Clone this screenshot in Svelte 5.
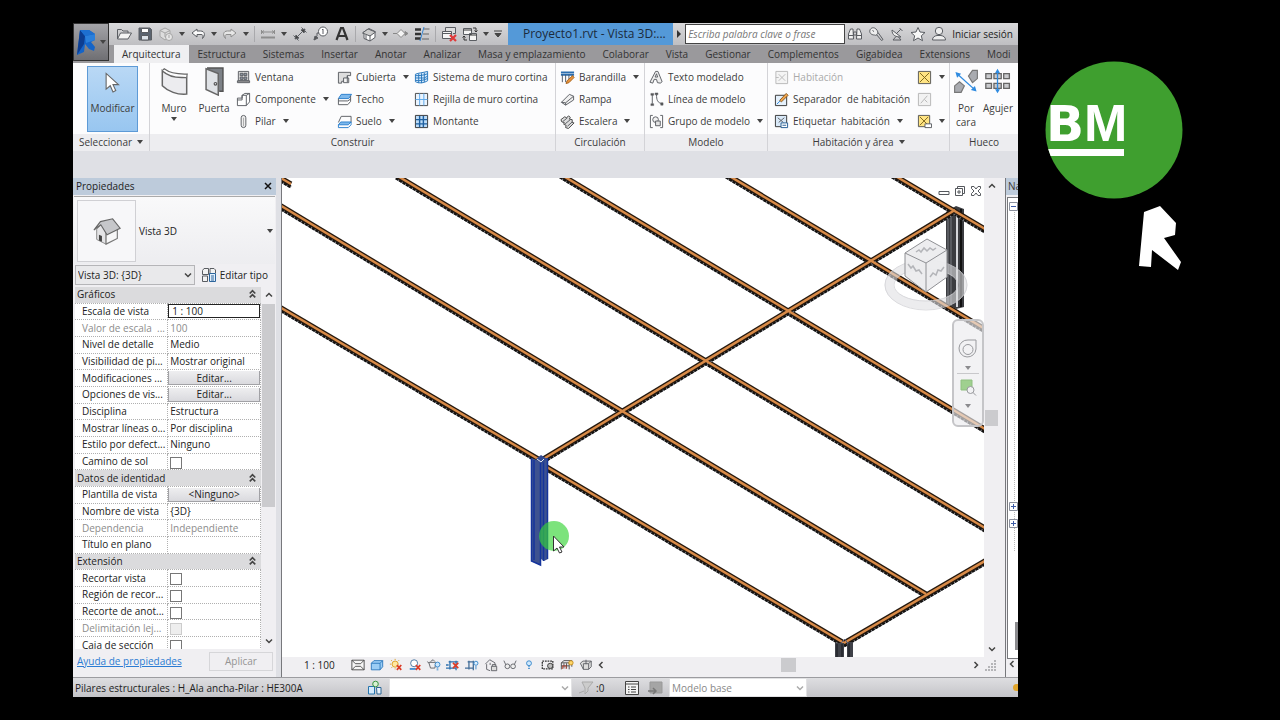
<script>
  const icons = {
    open: '<path d="M1.500 13V3.500h4l1.500 1.500h5v2"/><path d="M1.500 13l3-6h11l-3.500 6z" fill="#f4f4f4"/>',
    save: '<path d="M2 2h11l1.500 1.500V14H2z" fill="#5b6470"/><path d="M4.500 2.500h7v4h-7z" fill="#fff"/><path d="M4.500 9.500h7V14h-7z" fill="#dde3ea"/>',
    sync: '<g stroke="#a5a5a5"><path d="M2 4.500L7 2l5 2.500v6L7 14l-5-3.500z" fill="#ddd"/><path d="M2 4.500L7 7l5-2.500M7 7v4"/><circle cx="11" cy="11" r="3.500" fill="#e6e6e6"/><path d="M11 9v3"/></g>',
    undo: '<path d="M7 3L2 7l5 4V8.500h4c2 0 2.500 1 1.500 4 3-3 2.500-7.500-2-7.500H7z" fill="#fafafa"/>',
    redo: '<path d="M9 3l5 4-5 4V8.500H5c-2 0-2.500 1-1.500 4C.500 9.500 1 5 5.500 5H9z" fill="#e6e6e6" stroke="#8e8e8e"/>',
    measure: '<g stroke="#8d8d8d"><path d="M1.500 4v4M14.500 4v4M2 6h12M4 4.500L2 6l2 1.500M12 4.500L14 6l-2 1.500"/><path d="M1 11.500h14" stroke-width="2"/></g>',
    dim: '<path d="M3 13L13 3M1.500 9.500l5 5M9.500 1.500l5 5"/><path d="M3 13l1-4 3 3zM13 3L9 4l3 3z" fill="#444"/>',
    tag: '<circle cx="10" cy="5.500" r="4.500" fill="#fff"/><path d="M10 3v5M9 4l1-1M1 14l3-4V7h2"/><path d="M1 14l1-4 3 2z" fill="#555"/>',
    letter: '<path d="M2.500 14L7 2h2l4.500 12M4.500 10h7" stroke="#333" stroke-width="2.200"/>',
    house: '<path d="M2 6.500l6-4 6 3v6L9 15l-6-2.500V7" fill="#fff"/><path d="M1.500 7L7 3l7.500 3L9 10z" fill="#ccc"/><path d="M9 9.500V15M5 9v4"/>',
    section: '<path d="M4 7.500L8 3.500l4 4-4 4z" fill="#f4f4f4" stroke="#888"/><path d="M0 7.500h4M12 5.500l3 2-3 2z" stroke="#888" fill="#888"/>',
    thin: '<path d="M1 3.500h6M1 8h6M1 12.500h6" stroke="#333" stroke-width="2.500"/><path d="M9.500 3h6M9 8h6M8 13h7" stroke="#666"/><path d="M10 1L6 15" stroke="#3384d2"/>',
    closewin: '<path d="M4.500 5V1.500h10v6H12" fill="#ddd"/><path d="M1.500 5.500h9v7h-9z" fill="#f5f5f5"/><path d="M1.500 7.500h9"/><path d="M9 9l6 6M15 9l-6 6" stroke="#e03a3a" stroke-width="2.200"/>',
    switchwin: '<path d="M1.500 2.500h8v6h-8zM7.500 7.500h7v7h-7z" fill="#f5f5f5"/><path d="M1.500 4h8M7.500 9h7M11 2h3v4M12.500 4.500L14 6l1.500-1.500M5 14H2v-4M.500 11.500L2 10l1.500 1.500" stroke="#333"/>',
    binoc: '<path d="M1.500 13V8L3.500 3h2.500l.500 10zM14.500 13V8l-2-5H10l-.500 10z" fill="#f1f1f1"/><path d="M6.500 6h3v3h-3zM1.500 9.500h5M9.500 9.500h5"/>',
    key: '<path d="M8 8l5.500 6.500 1.500-1-5-7"/><path d="M6.500 9C3 9 1 6.500 2 4s4-3 6-1 2.500 4 1 5.500-2 .500-2.500.500z" fill="#eee"/><path d="M4.500 4.500l1.500 1"/>',
    dish: '<path d="M3 4c0 5 3 7 9 7z" fill="#eee"/><path d="M7.500 7.500L12 3M10.500 2l3 3M7 10.500L4 14h8l-2.500-3"/>',
    star: '<path d="M8 1.500l2 4.500 5 .500-3.700 3.300 1.200 4.900L8 12l-4.500 2.700 1.200-4.900L1 6.500 6 6z" fill="#f7f7f7"/>',
    user: '<circle cx="8" cy="5" r="3.700" fill="#eee"/><path d="M1.500 14c0-3 2-4 4.500-4.500h4c2.500.500 4.500 1.500 4.500 4.500z" fill="#eee"/>',
    cursor: '<path d="M3 1v11.500l3-2.500 2 4.500 2-1-2-4.300h4z" fill="#fff" stroke="#666" stroke-width=".8"/>',
    wall: '<path d="M1.500 2.500c3 3 7.500 4 13 3.500V15c-5 .500-10-1.500-13-4.500z" fill="#ececef" stroke="#666" stroke-width=".8"/><path d="M1.500 2.500l1-1c3 2.300 7 3 12.300 2.800l-.300 1.700" fill="#fff" stroke="#666" stroke-width=".6"/>',
    door: '<path d="M4 1h8.500v12.500H10.500" fill="#7d8187" stroke="#555" stroke-width=".8"/><path d="M3.500 1.500l6.500 2.500v11.500l-6.500-3z" fill="#dfe2e6" stroke="#666" stroke-width=".8"/><circle cx="8.500" cy="9.500" r=".7" stroke="#555" stroke-width=".6"/>',
    window: '<path d="M2.500 1.500h11v10h-11z" fill="#ddd"/><path d="M4.500 3.500h3v2.500h-3zM8.500 3.500h3v2.500h-3zM4.500 7.500h3V10h-3zM8.500 7.500h3V10h-3z" fill="#8f98a3"/><path d="M1.500 11.500h13v2h-13z" fill="#999"/>',
    component: '<path d="M1.500 6.500h5V3.500l3-2h5v9l-3.500 4h-9.500z" fill="#fff"/><path d="M6.500 3.500v5h-5M6.500 3.500h4.500l3.500-2M11 3.500v11"/>',
    column: '<rect x="5.500" y="1.500" width="5" height="13" rx="2.500" fill="#eee"/><path d="M8 4v9" stroke="#aaa"/>',
    roof: '<path d="M1.500 2.500h13V6H11v3H8v3H5v2H1.500z" fill="#ddd"/><path d="M7 8.500h5.500v5H7z" fill="#f4f4f4"/><path d="M11 6v7"/>',
    ceiling: '<path d="M1.500 7l3-4.500h11L12.500 7z" fill="#7db8ec" stroke="#2a7fce"/><path d="M1.500 7v6.500h10l3-3.500V4"/><path d="M1.500 9.500h10l3-2"/>',
    floor: '<path d="M1.500 9l3-6.500h10.500V9"/><path d="M1.500 11.500L4 8.500h11l-3 3z" fill="#7db8ec" stroke="#2a7fce"/><path d="M1.500 11.500v3H12l3-3v-3" stroke="#2a7fce"/>',
    curtain: '<path d="M1.500 4.500C5 3 9 3 14.500 1.500v10c-4 2.500-9 3-13 1z" fill="#d6e9fb" stroke="#2878bd"/><path d="M1.500 8.500h9.500l3.500-2M5 4v10M8 3.500v10.500M11 3v10M1.500 6c4 0 8 0 13-2M1.500 11c4 1 9 0 13-2" stroke="#2878bd"/>',
    gridc: '<path d="M1.500 1.500h13v13h-13z" fill="#eaf4fe" stroke="#444"/><path d="M6 1.500v13M10.500 1.500v13M1.500 8h13" stroke="#5ba6ea"/>',
    mullion: '<path d="M1.500 1.500h13v13h-13z" fill="#bcdcf8" stroke="#333"/><path d="M6 2v12M10 2v12M2 6h12M2 10.500h12" stroke="#1d5f9f" stroke-width="1.500"/>',
    railing: '<path d="M1 2.500h14M1 5h14" stroke="#2b6eb0" stroke-width="2"/><path d="M2.500 5v8M6 5v8M9.500 5v6M13 5v3" stroke="#4b5868"/><path d="M6.500 14.500l1-3 6-5.500 1.500 2-5.500 5.500z" fill="#e8923a" stroke="#a8641f"/>',
    ramp: '<path d="M1.500 11L10 2.500l4.500 2v4L6 14z" fill="#f0f0f0"/><path d="M1.500 11l4.500.500L14.500 4.500M6 11.500V14"/>',
    stair: '<path d="M1 6l4-3 2 1 2-2 2 1.500-1 2 3 .500v3l2 .500-6 6-3-1 .500-2.500L4 11l.500-2L2 8.500z" fill="#ddd" stroke="#444"/><path d="M3 8l5-4M5.500 10.500L11 6M8 13l5-4.500"/>',
    mtext: '<path d="M1 13L7 1.500h2.500l4.500 11-2 1.500-3-.500L8 10H5.500L4 14z" fill="#eee"/><path d="M6.500 7.500L8 4l1.200 3.500z" fill="#fff"/>',
    mline: '<path d="M3.500 3v9.500M8 2.500c0 6 1 9 6 10"/><path d="M2 1.500h3v2H2zM2 12.500h3v2H2zM6.500 1h3v2h-3zM12.500 11.500h2.500v2.500h-2.500z" fill="#555" stroke-width=".5"/>',
    mgroup: '<path d="M4 1.500H1.500v13H4M12 1.500h2.500v13H12"/><circle cx="7" cy="6" r="3" fill="#f2f2f2"/><path d="M7 7.500h5v5H7z" fill="#e5e5e5"/>',
    room: '<g stroke="#b9b9b9"><path d="M2 1.500h12.500v13H2z" fill="#f4f4f4"/><path d="M5 4.500l7 7M12 4.500l-7 7M2 8h3"/></g>',
    roomsep: '<path d="M1.500 3.500h12v11h-12z" fill="#e4f0fb" stroke="#333"/><path d="M3 13l8-8" stroke="#2f8be0"/><path d="M6 9l7-7.500 2 2L8 10.500z" fill="#f0a34a" stroke="#8a5a20"/>',
    roomtag: '<path d="M1.500 1.500h12v12h-12z" fill="#d9e9f8" stroke="#333"/><path d="M4 4l6 5M11 4L5 9"/><path d="M7.500 9.500h7v5h-7z" fill="#fff" stroke="#235c93"/><path d="M9 12h4" stroke="#235c93"/>',
    area: '<path d="M1.500 1.500h13v13h-13z" fill="#ffe483" stroke="#555"/><path d="M3 3l10 10M13 3L3 13" stroke="#7b6219"/>',
    areasep: '<g stroke="#b5b5b5"><path d="M1.500 1.500h13v13h-13z" fill="#f2f2f2"/><path d="M4 12l7-8M8 8l3 3"/></g>',
    areatag: '<path d="M1.500 1.500h12v12h-12z" fill="#ffe483" stroke="#555"/><path d="M3 3l9 9M12 3l-9 9" stroke="#7b6219"/><path d="M8.500 10.500h7v4h-7z" fill="#fff"/>',
    byface: '<path d="M9.500 5l2.500-3.500h3v5l-3 2.500zM1 11l3-2.500 3 2.500-2 4H1z" fill="#a9abb0" stroke="#777" stroke-width=".7"/><path d="M3 4l10 9" stroke="#2f8be0" stroke-width=".8"/><path d="M1.500 2.500l3.500 1L2.500 6zM14.500 14.500l-3.500-1 2.500-2.500z" fill="#2f8be0" stroke="none"/>',
    shaft: '<path d="M.500 3.500h3.500v3H.500zM11.500 3.500H15v3h-3.500zM.500 9.500h3.500v3H.500zM11.500 9.500H15v3h-3.500zM5.500 3.500h4.500v3H5.500zM5.500 9.500h4.500v3H5.500z" fill="#c9cacd" stroke="#666" stroke-width=".8"/><path d="M7.700 2v12" stroke="#2f8be0" stroke-width=".8"/><path d="M6.200 3L7.700.500 9.200 3zM6.200 13l1.500 2.500L9.200 13z" fill="#2f8be0" stroke="none"/>',
    bighouse: '<path d="M2.500 7v5.500l5 2.500V9L5 4.500z" fill="#e4e4e6" stroke="#888" stroke-width=".5"/><path d="M7.500 15l6-3V6.500l-6 3z" fill="#f7f7f8" stroke="#777" stroke-width=".6"/><path d="M1 7.500L4.500 3 11 1.500 15 6.500 8 10 4.700 4.700z" fill="#c6c7ca" stroke="#666" stroke-width=".6"/><path d="M3.700 10l1.600.700v3l-1.600-.700z" fill="#444" stroke="none"/>',
    edittype: '<path d="M1.500 3.500l1.500-2h4.500v6h-6zM9 7V1.500h4l1.500 1.500v3M1.500 9h5v5.500h-5z" fill="#f3f3f3"/><path d="M8.500 6.500h6v8h-6z" fill="#e2effb" stroke="#2c659c"/><path d="M10 9h3M10 11h3M10 13h3" stroke="#2c659c"/>',
    detail: '<path d="M1 2.500h14v11H1z" fill="#f6f6f6" stroke="#444"/><path d="M1 2.500l4 4h6l4-4M5 9.500h6M1 13.500l4-4M15 13.500l-4-4" stroke="#444"/>',
    style: '<path d="M1.500 6l3-3h10v7l-3 3.500h-10z" fill="#9bcdf5" stroke="#2574ba"/><path d="M1.500 6h10v7.500M11.500 6l3-3" stroke="#2574ba"/>',
    sun: '<circle cx="7" cy="7" r="3.500" fill="#ffe9a0" stroke="#d99a1e"/><path d="M7 1v1.500M1 7h1.500M2.500 2.500l1 1M2.500 11.500l1-1M11.500 2.500l-1 1M7 12v1" stroke="#d99a1e"/><path d="M9 8l5 5.500M14 8l-5 5.500" stroke="#dc3c28" stroke-width="2"/>',
    shadow: '<circle cx="7" cy="6" r="4" fill="#fff" stroke="#3d6e9c"/><path d="M2 12.500h7" stroke="#3b8ad0" stroke-width="2"/><path d="M9 8l5 5.500M14 8l-5 5.500" stroke="#dc3c28" stroke-width="2"/>',
    render: '<path d="M2 5h8l-1 6.500H4zM2 6L.500 4M4 4l3-2 2 2"/><circle cx="12" cy="7.500" r="2.800" fill="#cbe6fb" stroke="#2f82c9"/><path d="M11 11.500h2M11 13.500h2" stroke="#2f82c9"/>',
    crop: '<path d="M3 4.500h11M4.500 3v10M0 11.500h12M11.500 3v11M0 8h3" stroke="#2c70ae" stroke-width="1.500"/><path d="M8 5.500l6 6M14 5.500l-6 6" stroke="#dc3c28" stroke-width="2"/>',
    cropview: '<path d="M3 4.500h7M4.500 3v10M0 11.500h10M9.500 3v11" stroke="#446f9a" stroke-width="1.500"/><circle cx="12.500" cy="6" r="2.300" fill="#dff0fd" stroke="#2f82c9"/><path d="M12.500 9v4" stroke="#2f82c9"/>',
    lock: '<path d="M1.500 7l5-5 6 3.500v4M3 7v6l4 1.500M7 8V5.500"/><path d="M8.500 9.500h6v5h-6zM9.500 9.500v-2h4v2" fill="#ddd"/>',
    glasses: '<path d="M1 3l3 6.500M15 3l-3 6.500"/><circle cx="5" cy="9.500" r="2.700" fill="#eee"/><circle cx="11.500" cy="9.500" r="2.700" fill="#eee"/>',
    bulb: '<circle cx="8" cy="6" r="2.800" fill="#cfe8fc" stroke="#2f82c9"/><path d="M7 10h2M7 12h2" stroke="#2f82c9"/>',
    film: '<path d="M1.500 3.500h12v9h-12z" stroke="#333" stroke-dasharray="2 1" stroke-width="1.500"/><circle cx="10.500" cy="9" r="3" fill="#bbb" stroke="#333"/>',
    analytic: '<path d="M1.500 5.500l3-2.500h9v7M1.500 5.500h9V13M1.500 5.500V13M4.500 6v6M7.500 6v6M1.500 9h9" stroke="#444"/><circle cx="12.500" cy="5.500" r="2.500" fill="#ffd76a" stroke="#c48a18"/><path d="M3 12.500V9h4v3.500" stroke="#bd4334"/>',
    temp: '<path d="M1.500 6l3-2.500h9.500V10l-3 3H5z" fill="#ddd"/><path d="M5 6.500h6V13M11 6.500l3-3M5 6.500V13M8 2v5"/>',
    worksets: '<path d="M1.500 6.500h6v7.500h-6z" fill="#d5eafb" stroke="#2474ad"/><circle cx="8.500" cy="4" r="2.800" fill="#d9f1d3" stroke="#3a9440"/><path d="M9.500 7.500H14V14H10z" fill="#eaf2fa" stroke="#2b6796"/>',
    funnel: '<path d="M4 2h11L10 8v3l-3 3V8z" fill="#ccc" stroke="#aaa"/><path d="M1 13l5-2" stroke="#aaa"/>',
    list: '<path d="M1.500 1.500h13v13h-13z" fill="#f5f5f5" stroke="#444"/><path d="M1.500 4h13M4 7h1.500M4 9.500h1.500M4 12h1.500M7 7h5M7 9.500h5M7 12h5" stroke="#444"/>',
    exclude: '<path d="M3 2h12v11H3z" fill="#a5a5a5" stroke="#999"/><path d="M1 11h7M6 8l3 3-3 3" stroke="#777" stroke-width="1.500"/>',
  };

  const quick = [
    'open', 'save', 'sync', '▾', 'undo', '▾', 'redo', '▾', '|',
    'measure', '▾', 'dim', 'tag', 'letter', '|',
    'house', '▾', 'section', 'thin', '|', 'closewin', 'switchwin', '▾',
  ];

  const tabs = [
    'Arquitectura', 'Estructura', 'Sistemas', 'Insertar', 'Anotar', 'Analizar', 'Masa y emplazamiento',
    'Colaborar', 'Vista', 'Gestionar', 'Complementos', 'Gigabidea', 'Extensions', 'Modi',
  ];

  const construir = [
    [['window', 'Ventana'], ['component', 'Componente', true], ['column', 'Pilar', true]],
    [['roof', 'Cubierta', true], ['ceiling', 'Techo'], ['floor', 'Suelo', true]],
    [['curtain', 'Sistema de muro cortina'], ['gridc', 'Rejilla de muro cortina'], ['mullion', 'Montante']],
  ];
  const circulacion = [['railing', 'Barandilla', true], ['ramp', 'Rampa'], ['stair', 'Escalera', true]];
  const modelo = [['mtext', 'Texto modelado'], ['mline', 'Línea de modelo'], ['mgroup', 'Grupo de modelo', true]];
  const habitacion = [
    ['room', 'Habitación', false, true],
    ['roomsep', 'Separador  de habitación'],
    ['roomtag', 'Etiquetar  habitación', true],
  ];
  const areas = [['area', '', true], ['areasep', '', false, true], ['areatag', '', true]];

  const props = [
    { group: 'Gráficos' },
    { name: 'Escala de vista', value: '1 : 100', kind: 'input' },
    { name: 'Valor de escala  ...', value: '100', off: true },
    { name: 'Nivel de detalle', value: 'Medio' },
    { name: 'Visibilidad de pi...', value: 'Mostrar original' },
    { name: 'Modificaciones ...', value: 'Editar...', kind: 'button' },
    { name: 'Opciones de vis...', value: 'Editar...', kind: 'button' },
    { name: 'Disciplina', value: 'Estructura' },
    { name: 'Mostrar líneas o...', value: 'Por disciplina' },
    { name: 'Estilo por defect...', value: 'Ninguno' },
    { name: 'Camino de sol', kind: 'check' },
    { group: 'Datos de identidad' },
    { name: 'Plantilla de vista', value: '<Ninguno>', kind: 'button' },
    { name: 'Nombre de vista', value: '{3D}' },
    { name: 'Dependencia', value: 'Independiente', off: true },
    { name: 'Título en plano', value: '' },
    { group: 'Extensión' },
    { name: 'Recortar vista', kind: 'check' },
    { name: 'Región de recor...', kind: 'check' },
    { name: 'Recorte de anot...', kind: 'check' },
    { name: 'Delimitación lej...', kind: 'check', off: true },
    { name: 'Caja de sección', kind: 'check' },
  ];

  const viewTools = ['detail', 'style', 'sun', 'shadow', 'render', 'crop', 'cropview', 'lock', 'glasses', 'bulb', 'film', 'analytic', 'temp'];

  // model beams in canvas units: x1, y1, x2, y2
  const beams = [
    [274, 173, 291, 183],
    [278, 305, 540, 459],
    [545, 465, 844, 642],
    [278, 203, 926, 593],
    [396, 174, 990, 530],
    [560, 173, 990, 431],
    [726, 173, 990, 331],
    [892, 173, 990, 231],
    [540, 460, 955, 209],
    [844, 642, 990, 557],
  ];

  let activeTab = $state('Arquitectura');
</script>

{#snippet icon(name, size = 'sm')}
  <svg class="icon {size}" viewBox="0 0 16 16" aria-hidden="true">{@html icons[name]}</svg>
{/snippet}

{#snippet caret()}
  <svg class="caret" viewBox="0 0 6 4" aria-hidden="true"><path d="M0 0h6L3 4z" /></svg>
{/snippet}

{#snippet chevron(d)}
  <svg class="chev" viewBox="0 0 10 10" aria-hidden="true"><path {d} /></svg>
{/snippet}

{#snippet stack(items)}
  <div class="stack">
    {#each items as [name, label, menu, off]}
      <button type="button" class="tool" disabled={off} aria-label={label || name}>
        {@render icon(name)}
        {#if label}<span>{label}</span>{/if}
        {#if menu}{@render caret()}{/if}
      </button>
    {/each}
  </div>
{/snippet}

<main>
  <div class="window">
    <header>
      <button type="button" class="app-btn" aria-label="Menú">
        <svg viewBox="0 0 22 28" aria-hidden="true">
          <path d="M4 2h9l6 4v6l-4 2 4 5-1 4-5-2-4-5-1 8-7 3z" fill="#1464c8" />
          <path d="M4 2l5 6-1 8-7 11z" fill="#0c3d91" />
          <path d="M9 8l10-2v6l-9 3z" fill="#2a7fdb" />
          <path d="M13 2l6 4-10 2-5-6z" fill="#1d6fd0" />
        </svg>
        {@render caret()}
      </button>
      <div class="bars">
        <div class="titlebar">
          <div class="quick">
            {#each quick as q}
              {#if q === '|'}<i class="sep"></i>
              {:else if q === '▾'}{@render caret()}
              {:else}<button type="button" aria-label={q}>{@render icon(q)}</button>{/if}
            {/each}
            <svg class="more" viewBox="0 0 8 8" aria-hidden="true"><path d="M0 1h8M1 3.500h6L4 7z" /></svg>
          </div>
          <div class="doc">Proyecto1.rvt - Vista 3D:...</div>
          <svg class="next" viewBox="0 0 4 8" aria-hidden="true"><path d="M0 0l4 4-4 4z" /></svg>
          <input class="search" placeholder="Escriba palabra clave o frase" aria-label="Buscar" />
          <div class="account">
            {#each ['binoc', 'key', 'dish', 'star', 'user'] as n}
              <button type="button" aria-label={n}>{@render icon(n)}</button>
            {/each}
            <a href="#login">Iniciar sesión</a>
          </div>
        </div>
        <nav>
          {#each tabs as t}
            <button type="button" class:active={activeTab === t} onclick={() => (activeTab = t)}>{t}</button>
          {/each}
        </nav>
      </div>
    </header>

    <div class="ribbon">
      <section>
        <div class="tools">
          <button type="button" class="modify">{@render icon('cursor', 'md')}<span>Modificar</span></button>
        </div>
        <h2>Seleccionar {@render caret()}</h2>
      </section>
      <section>
        <div class="tools build">
          <button type="button" class="big">{@render icon('wall', 'lg')}<span>Muro</span>{@render caret()}</button>
          <button type="button" class="big">{@render icon('door', 'lg')}<span>Puerta</span></button>
          {#each construir as col}{@render stack(col)}{/each}
        </div>
        <h2>Construir</h2>
      </section>
      <section>
        <div class="tools">{@render stack(circulacion)}</div>
        <h2>Circulación</h2>
      </section>
      <section>
        <div class="tools">{@render stack(modelo)}</div>
        <h2>Modelo</h2>
      </section>
      <section>
        <div class="tools spread">{@render stack(habitacion)}{@render stack(areas)}</div>
        <h2>Habitación y área {@render caret()}</h2>
      </section>
      <section class="last">
        <div class="tools">
          <button type="button" class="big">{@render icon('byface', 'ml')}<span>Por<br />cara</span></button>
          <button type="button" class="big">{@render icon('shaft', 'ml')}<span>Agujer</span></button>
        </div>
        <h2>Hueco</h2>
      </section>
    </div>

    <div class="body">
      <aside class="props">
        <h3>Propiedades <button type="button" aria-label="Cerrar">{@render chevron('M2 2l6 6M8 2l-6 6')}</button></h3>
        <button type="button" class="type">
          <span class="thumb">{@render icon('bighouse', 'xl')}</span>
          <span>Vista 3D</span>
          {@render caret()}
        </button>
        <div class="instance">
          <div class="pick">
            <select aria-label="Vista"><option>Vista 3D: {'{3D}'}</option></select>
            {@render chevron('M2 3.5l3 3 3-3')}
          </div>
          <button type="button">{@render icon('edittype')}Editar tipo</button>
        </div>
        <div class="grid">
          <div class="clip">
            <table>
              <tbody>
                {#each props as p, i}
                  {#if p.group}
                    <tr class="group">
                      <th colspan="2">{p.group}{@render chevron('M2.500 5L5 2.500 7.500 5M2.500 8.500L5 6l2.500 2.500')}</th>
                    </tr>
                  {:else}
                    <tr class:off={p.off}>
                      <td class="name"><label for="p{i}">{p.name}</label></td>
                      <td class={p.kind}>
                        {#if p.kind === 'check'}<input id="p{i}" type="checkbox" disabled={p.off} />
                        {:else if p.kind === 'button'}<button id="p{i}" type="button">{p.value}</button>
                        {:else if p.kind === 'input'}<input id="p{i}" value={p.value} />
                        {:else}<output id="p{i}">{p.value}</output>{/if}
                      </td>
                    </tr>
                  {/if}
                {/each}
              </tbody>
            </table>
          </div>
          <div class="vscroll">
            {@render chevron('M2 6.5l3-3 3 3')}
            <div class="track"><div class="knob"></div></div>
            {@render chevron('M2 3.5l3 3 3-3')}
          </div>
        </div>
        <footer>
          <a href="#help">Ayuda de propiedades</a>
          <button type="button" disabled>Aplicar</button>
        </footer>
      </aside>

      <div class="view">
        <div class="view-top">
          <div class="canvas">
            <svg class="model" viewBox="282 178 702 479" preserveAspectRatio="xMinYMin slice" aria-label="Vista 3D">
              <!-- far column -->
              <g>
                <path d="M946 212l10-6 8 3v98l-8 2-10-6z" fill="#3b3c40" />
                <path d="M948 213v92M951 212v94" stroke="#77797e" />
                <path d="M957 210v97" stroke="#d5d6da" stroke-width="2" />
                <path d="M961 209v98" stroke="#111" stroke-width="2" />
              </g>
              <g fill="none">
                {#each beams as [x1, y1, x2, y2]}
                  <path d="M{x1} {y1 + 4}L{x2} {y2 + 4}" stroke="#8b8c92" stroke-width="3" />
                  <path d="M{x1} {y1 + 4}L{x2} {y2 + 4}" stroke="#111" stroke-width="3" stroke-dasharray="3 1" />
                  <path d="M{x1} {y1 + 1}L{x2} {y2 + 1}" stroke="#24180e" stroke-width="5" />
                {/each}
                {#each beams as [x1, y1, x2, y2]}
                  <path d="M{x1} {y1 + 1}L{x2} {y2 + 1}" stroke="#d98b48" stroke-width="2.400" />
                {/each}
              </g>
              <!-- front column -->
              <path d="M835 643h9v14h-9zM847 642h6v15h-6z" fill="#3f4148" />
              <path d="M837 644v13M842 644v13M849 643v14" stroke="#17181c" />
              <path d="M841 643l4-4 3 5" fill="none" stroke="#5b6480" />
              <!-- selected column -->
              <path d="M531 458l9 3v104l-9-4z" fill="#3d5290" />
              <path d="M541 461l7-3v101l-4 2-3-2z" fill="#3d5290" />
              <path d="M531.500 458v103l9 4V461M543.500 459v102M547.500 458v101M534 460v100" fill="none" stroke="#15349c" stroke-width="1.500" />
              <path d="M536 459l5-4 6 4-5 5z" fill="#30488f" />
              <path d="M537 459l4 3 3-3" fill="none" stroke="#e6e8f0" />
              <circle cx="554" cy="536" r="15" fill="#35d435" opacity=".65" />
              <path d="M553.500 536v15l3.500-3 2.500 5 2.500-1-2.500-5h4.500z" fill="#fff" stroke="#333" />
              <!-- view cube -->
              <g>
                <ellipse cx="926" cy="285" rx="37" ry="20" fill="none" stroke="#e0e0e3" stroke-width="9" opacity=".6" />
                <ellipse cx="926" cy="285" rx="41" ry="25" fill="none" stroke="#cfcfd2" stroke-width=".7" />
                <ellipse cx="926" cy="285" rx="32" ry="16" fill="none" stroke="#cfcfd2" stroke-width=".7" />
                <path d="M905 253l22-14 20 11v27l-21 15-21-16z" fill="#ececee" opacity=".92" />
                <path d="M905 253l22-14 20 11-21 13zM926 263v29l-21-16v-23M926 292l21-15v-27" fill="none" stroke="#8f9094" />
                <path d="M916 252l3-2 2 2 3-4 3 3 3-3 3 2 3-2M908 264l3 4 2-2 3 5 3-1 3 4M930 277l3-4 3 2 2-5 3 1 3-4" fill="none" stroke="#b4b5b9" stroke-width="1.500" />
              </g>
            </svg>
            <div class="win-ctl">
              <button type="button" aria-label="Minimizar">
                <svg viewBox="0 0 12 12"><path d="M1 6.500h10v3H1z" /></svg>
              </button>
              <button type="button" aria-label="Restaurar">
                <svg viewBox="0 0 12 12"><path d="M3.500 3V1.500h7v7H9M1.500 3.500h7v7h-7zM4 6h2v2H4z" /></svg>
              </button>
              <button type="button" aria-label="Cerrar vista">
                <svg viewBox="0 0 12 12"><path d="M1.500 1.500H4l2 2.500 2-2.500h2.500v2L8 6l2.500 2.500v2H8L6 8l-2 2.500H1.500v-2L4 6 1.500 3.500z" /></svg>
              </button>
            </div>
            <div class="navbar">
              <button type="button" aria-label="Rueda de navegación">
                <svg viewBox="0 0 20 20"><path d="M10 1h8v9a8.500 8.500 0 1 1-8-9z" /><circle cx="10" cy="10.500" r="5" /></svg>
              </button>
              {@render caret()}
              <hr />
              <button type="button" aria-label="Zoom región">
                <svg viewBox="0 0 20 20"><path d="M3 3h11v10H3z" class="green" /><circle cx="12.500" cy="13" r="3.500" /><path d="M15 15.500l3 3" /></svg>
              </button>
              {@render caret()}
            </div>
          </div>
          <div class="vscroll view-v">
            {@render chevron('M2 6.5l3-3 3 3')}
            <div class="track"><div class="knob"></div></div>
            {@render chevron('M2 3.5l3 3 3-3')}
          </div>
        </div>
        <div class="viewbar">
          <span class="scale">1 : 100</span>
          <div class="view-tools">
            {#each viewTools as n}<button type="button" aria-label={n}>{@render icon(n)}</button>{/each}
          </div>
          {@render chevron('M6.5 2l-3 3 3 3')}
          <div class="htrack"><div class="knob"></div></div>
          {@render chevron('M3.5 2l3 3-3 3')}
          <svg class="grip" viewBox="0 0 12 12"><path d="M9 2h2M6 5h2M9 5h2M3 8h2M6 8h2M9 8h2M0 11h2M3 11h2M6 11h2M9 11h2" /></svg>
        </div>
      </div>

      <aside class="browser">
        <h3>Na</h3>
        <div class="tree">
          <svg viewBox="0 0 10 460" preserveAspectRatio="xMinYMin" aria-hidden="true">
            <path class="dots" d="M6.500 14v340" />
            <path class="box" d="M1.500 4.500h8v8h-8zM1.500 304.500h8v8h-8zM1.500 321.500h8v8h-8z" />
            <path class="mark" d="M3 8.500h5M3 308.500h5M5.500 306v5M3 325.500h5M5.500 323v5" />
            <path class="thumb-r" d="M7 424h3v28H7z" />
          </svg>
        </div>
        <div class="foot">{@render chevron('M6.5 2l-3 3 3 3')}</div>
      </aside>
    </div>

    <div class="status">
      <span class="msg">Pilares estructurales : H_Ala ancha-Pilar : HE300A</span>
      {@render icon('worksets')}
      <div class="pick wide">
        <select aria-label="Subproyecto"><option></option></select>
        {@render chevron('M2 3.5l3 3 3-3')}
      </div>
      {@render icon('funnel')}
      <span class="count">:0</span>
      {@render icon('list')}
      {@render icon('exclude')}
      <div class="pick">
        <select aria-label="Opción de diseño"><option>Modelo base</option></select>
        {@render chevron('M2 3.5l3 3 3-3')}
      </div>
      <i class="dot"></i>
    </div>
  </div>

  <div class="brand">
    <svg viewBox="0 0 262 300" role="img" aria-label="BM">
      <clipPath id="disc"><circle cx="96" cy="130" r="68.500" /></clipPath>
      <circle cx="96" cy="130" r="68.500" fill="#3f9f2f" />
      <g clip-path="url(#disc)" fill="#fff">
        <text x="28" y="141" class="logo-b">B</text>
        <text x="66" y="141" class="logo-m">M</text>
        <path d="M20 149h86v7H20z" />
      </g>
      <path d="M126 212l16-6 16 17-1 12-11 3 17 24-3 8-26-20-1 17-12-1z" fill="#fff" />
    </svg>
  </div>
</main>

<style>
  :global(body) { background: #000; }
  main {
    display: grid; grid-template-columns: minmax(0, 1fr) 262px; height: 100vh; box-sizing: border-box;
    padding: 23px 0 23px 73px; overflow: hidden; background: #000; color: #3c3c3c;
    font: 10px/16px "Open Sans", "Noto Sans", sans-serif;
  }
  button { font: inherit; color: inherit; background: none; border: 0; padding: 0; margin: 0; white-space: nowrap; }
  h2, h3 { margin: 0; font: inherit; }
  a { color: inherit; text-decoration: none; }
  svg { display: block; flex: none; }
  .window { display: flex; flex-direction: column; min-height: 0; background: #dfe0e5; overflow: hidden; }

  .icon { width: 16px; height: 16px; fill: none; stroke: #5a5d62; stroke-width: 1; }
  .icon.md { width: 22px; height: 22px; }
  .icon.ml { width: 26px; height: 30px; }
  .icon.lg { width: 31px; height: 30px; }
  .icon.xl { width: 30px; height: 30px; }
  .caret { width: 6px; height: 4px; fill: #444; }
  .chev { width: 10px; height: 10px; fill: none; stroke: #444; stroke-width: 1.5; }

  header { display: flex; height: 40px; flex: none; background: #9b9a9d; }
  .app-btn {
    display: flex; align-items: center; justify-content: center; gap: 2px; width: 36px; height: 38px;
    box-sizing: border-box; border: 1px solid #333; background: linear-gradient(#a4a4a8, #6f6f73);
  }
  .app-btn > svg:first-child { width: 22px; height: 28px; }
  .bars { flex: 1; min-width: 0; }
  .titlebar { display: flex; align-items: center; height: 22px; background: linear-gradient(#d8d8da, #bfbfc2); }
  .quick { display: flex; align-items: center; gap: 5px; padding: 0 6px 0 7px; }
  .sep { width: 1px; height: 16px; background: #a9a9ac; }
  .more { width: 8px; height: 8px; fill: #444; stroke: #444; }
  .doc { flex: 1; height: 22px; padding-left: 15px; background: #5499d8; color: #1b2b3c; font-size: 12px; line-height: 22px; white-space: nowrap; overflow: hidden; }
  .next { width: 4px; height: 8px; padding: 0 4px; fill: #333; }
  .search {
    width: 160px; height: 20px; box-sizing: border-box; border: 1px solid #444; background: #fff; padding: 0 2px;
    font: italic 10px "Open Sans", sans-serif; color: #555;
  }
  .search::placeholder { color: #777; }
  .account { display: flex; align-items: center; gap: 5px; padding: 0 5px 0 2px; color: #222; white-space: nowrap; }
  nav { display: flex; height: 18px; padding-left: 5px; overflow: hidden; background: #9a999c; }
  nav button { padding: 0 9px 0 8px; flex: none; line-height: 18px; color: #333; }
  nav button.active { padding: 0 8px; margin-right: 1px; background: #efeff1; }

  .ribbon {
    display: grid; grid-template-columns: 77px 406px 89px 123px 182px minmax(0, 1fr);
    flex: none; height: 88px; margin-bottom: 27px; background: #fcfcfd; overflow: hidden;
  }
  section { display: flex; flex-direction: column; min-width: 0; border-right: 1px solid #d3d3d7; }
  section.last { border-right: 0; overflow: hidden; }
  section h2 {
    display: flex; align-items: center; justify-content: center; gap: 5px; height: 15px; padding-bottom: 2px;
    background: #ededf0; white-space: nowrap;
  }
  .tools { display: flex; flex: 1; padding: 3px 4px 0; }
  .last .tools { padding-left: 0; }
  .spread { padding-left: 6px; justify-content: space-between; }
  .build { display: grid; grid-template-columns: 40px 42px 101px 77px minmax(0, 1fr); }
  .stack { display: flex; flex-direction: column; }
  .tool { display: flex; align-items: center; gap: 4px; height: 22px; }
  .tool .icon { width: 15px; height: 15px; }
  .tool span { white-space: pre; }
  .tool .caret { margin-left: 3px; }
  .tool:disabled { color: #aaa; }
  .big { display: flex; flex-direction: column; align-items: center; width: 38px; line-height: 14px; }
  .build .big { width: 40px; }
  .big span { padding-top: 5px; }
  .big .caret { margin-top: 2px; }
  .modify {
    display: flex; flex-direction: column; align-items: center; gap: 6px; width: 51px; height: 66px; box-sizing: border-box; margin-left: 10px;
    padding-top: 5px; border: 1px solid #5d9ad6; background: linear-gradient(#b9d8f5, #98c6f0);
  }

  .body { display: flex; flex: 1; min-height: 0; }
  .props { display: flex; flex-direction: column; width: 203px; flex: none; background: #f0eff2; color: #222; }
  .props h3 { display: flex; justify-content: space-between; align-items: center; height: 15px; padding: 0 3px 2px; background: #bdcbdb; }
  .props h3 .chev { stroke: #111; }
  .type {
    display: flex; align-items: center; gap: 3px; height: 68px; margin: 1px 1px 0; padding: 2px 2px 2px 3px;
    border-top: 1px solid #aaa; background: linear-gradient(#f9f9fa, #ededf0); text-align: left;
  }
  .type .caret { margin-left: auto; }
  .thumb { display: grid; place-items: center; width: 57px; height: 60px; border: 1px solid #d0d0d4; background: #f7f7f9; }
  .instance { display: flex; align-items: center; gap: 6px; height: 22px; padding: 0 8px 1px 2px; }
  .instance button { display: flex; align-items: center; gap: 3px; }
  .pick { position: relative; flex: 1; height: 20px; box-sizing: border-box; }
  .pick select {
    appearance: none; width: 100%; height: 100%; box-sizing: border-box; border: 1px solid #b5b5b8; border-radius: 0;
    background: #e9e9eb; padding: 0 2px; font: inherit; color: inherit;
  }
  .pick .chev { position: absolute; right: 2px; top: 5px; pointer-events: none; }
  .grid { display: flex; flex: 1; min-height: 0; padding-left: 2px; }
  .clip { flex: 1; min-width: 0; overflow: hidden; }
  table { width: 100%; height: 367px; border-collapse: collapse; table-layout: fixed; background: #fff; }
  th, td { height: 14px; padding: 0; border-bottom: 1px dotted #b0b0b0; font-weight: normal; text-align: left; line-height: 13px; white-space: nowrap; overflow: hidden; }
  th { background: #dbdbdd; padding: 0 2px; }
  th .chev { float: right; width: 11px; height: 11px; margin-right: 1px; }
  td { padding-left: 2px; border-right: 1px dotted #b0b0b0; }
  td.name { padding-left: 7px; }
  td.name label { white-space: pre; }
  td.button { padding: 0; }
  td.button button { display: block; width: 100%; height: 14px; border: 1px solid #a2a2a6; border-width: 0 1px 1px; background: linear-gradient(#eeeef0, #dadade); line-height: 12px; }
  td.input { padding: 0; }
  td.input input { display: block; width: 100%; height: 14px; box-sizing: border-box; border: 1px solid #222; padding: 0 3px; font: inherit; line-height: 12px; color: inherit; }
  td input[type='checkbox'] { appearance: none; display: block; width: 12px; height: 12px; margin: 2px 0 0; box-sizing: border-box; border: 1px solid #777; background: #fff; }
  td input[type='checkbox']:disabled { border-color: #ccc; background: #eee; }
  .off { color: #8c8c8c; }
  .vscroll { display: flex; flex-direction: column; align-items: center; width: 15px; flex: none; padding: 3px 0; background: #f0eff2; }
  .track { flex: 1; align-self: stretch; padding: 4px 1px; }
  .track .knob { height: 62%; background: #cbcbce; }
  .props footer { display: flex; justify-content: space-between; align-items: center; height: 24px; padding: 0 3px 4px 4px; }
  .props footer a { color: #2b7cd3; text-decoration: underline; }
  .props footer button { width: 64px; height: 19px; border: 1px solid #d6d6d9; color: #949494; }

  .view { display: flex; flex-direction: column; flex: 1; min-width: 0; margin-left: 5px; border-left: 1px solid #77787c; border-right: 1px solid #77787c; padding-right: 6px; background: #f0eff2; }
  .view-top { display: flex; flex: 1; min-height: 0; }
  .canvas { position: relative; flex: 1; min-width: 0; background: #fff; overflow: hidden; }
  .model { width: 100%; height: 100%; }
  .win-ctl { position: absolute; top: 7px; right: 2px; display: flex; gap: 4px; }
  .win-ctl svg { width: 12px; height: 12px; fill: #fff; stroke: #55585d; }
  .navbar {
    position: absolute; top: 141px; right: 0; display: flex; flex-direction: column; align-items: center; gap: 7px;
    width: 32px; height: 108px; box-sizing: border-box; padding-top: 18px; border: 2px solid #c5c5c8; border-radius: 6px;
    background: rgba(235, 235, 238, 0.65);
  }
  .navbar button svg { width: 20px; height: 20px; fill: #f2f2f4; stroke: #98999d; }
  .navbar .green { fill: #9fd08f; stroke: #8fbf80; }
  .navbar .caret { fill: #8b8b8e; }
  .navbar hr { width: 22px; margin: -4px 0; border: 0; border-top: 1px solid #c8c8cb; }
  .view-v .track { padding: 219px 1px 0; }
  .view-v .knob { height: 16px; }
  .viewbar { display: flex; align-items: center; height: 20px; flex: none; padding: 0 2px 4px 22px; box-sizing: border-box; color: #222; }
  .scale { width: 46px; white-space: nowrap; }
  .view-tools { display: flex; gap: 3px; padding-right: 2px; }
  .view-tools .icon { width: 16px; height: 14px; }
  .htrack { flex: 1; }
  .htrack .knob { width: 15px; height: 14px; margin-left: 48%; background: #cbcbce; }
  .grip { width: 12px; height: 12px; margin-left: 4px; stroke: #b5b5b8; stroke-width: 2; }

  .browser { display: flex; flex-direction: column; width: 12px; flex: none; overflow: hidden; background: #f0eff2; }
  .browser h3 { height: 17px; padding-left: 2px; background: #bdcbdb; white-space: nowrap; }
  .tree { flex: 1; margin: 2px 0 0 1px; border: 1px solid #77787c; border-right: 0; background: #fff; min-height: 0; overflow: hidden; }
  .tree svg { width: 10px; height: 460px; fill: none; stroke: #8a8f9c; }
  .tree .dots { stroke: #bbb; stroke-dasharray: 1 1; }
  .tree .box { fill: #fff; }
  .tree .mark { stroke: #3d5ca8; }
  .tree .thumb-r { fill: #8b8b8e; stroke: none; }
  .foot { height: 18px; padding-left: 1px; }

  .status {
    display: flex; align-items: center; height: 20px; flex: none; box-sizing: border-box; padding: 0 0 0 2px;
    border-top: 1px solid #9c9ca0; background: linear-gradient(#dedee1, #c4c4c8); color: #222;
  }
  .msg { width: 292px; white-space: nowrap; }
  .status .pick { flex: none; width: 138px; height: 19px; margin-left: 6px; color: #888; }
  .status .pick.wide { width: 183px; margin-right: 6px; }
  .status .pick select { background: #fff; border-color: #e2e2e4; }
  .status .pick .chev { stroke: #aaa; }
  .count { width: 28px; padding-left: 2px; }
  .status > .icon + .icon { margin-left: 7px; }
  .dot { width: 5px; height: 7px; margin-left: auto; border-radius: 4px 0 0 4px; background: #e0a52c; }

  .brand { margin-top: -23px; }
  .brand svg { width: 262px; height: 300px; }
  .logo-b { font: bold 50px "DejaVu Sans", sans-serif; }
  .logo-m { font: bold 52px "Liberation Sans", sans-serif; }
</style>
